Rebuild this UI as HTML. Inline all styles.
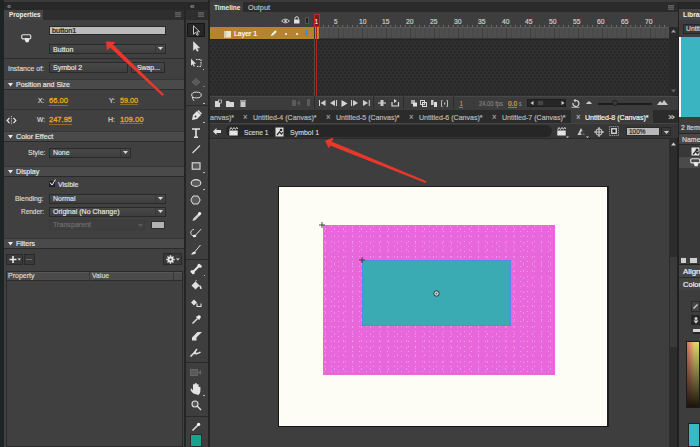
<!DOCTYPE html>
<html><head><meta charset="utf-8"><style>
*{box-sizing:border-box}
html,body{margin:0;padding:0}
body{width:700px;height:447px;overflow:hidden;position:relative;background:#3c3c3c;font-family:"Liberation Sans",sans-serif}
.a{position:absolute}
.t{position:absolute;white-space:pre;transform-origin:0 0;-webkit-text-stroke:0.2px currentColor}
svg{position:absolute;overflow:visible}
</style></head><body>
<div class="a" style="left:0px;top:0px;width:700px;height:2px;background:#3a3a3a;"></div>
<div class="a" style="left:0px;top:2px;width:700px;height:8px;background:#282828;"></div>
<div class="a" style="left:0px;top:0px;width:4px;height:447px;background:#1d2424;"></div>
<div class="t" style="left:7.00px;top:3.00px;font-size:7px;line-height:7px;font-weight:400;color:#8a8a8a;transform:scaleX(1.0240);">«</div>
<div class="t" style="left:189.50px;top:3.00px;font-size:7px;line-height:7px;font-weight:400;color:#8a8a8a;transform:scaleX(1.1520);">«</div>
<div class="a" style="left:4px;top:10px;width:180px;height:10px;background:#2e2e2e;"></div>
<div class="a" style="left:4px;top:10px;width:39px;height:10px;background:#444444;"></div>
<div class="t" style="left:8.50px;top:11.00px;font-size:7.5px;line-height:7.5px;font-weight:700;color:#f2f2f2;transform:scaleX(0.8488);-webkit-text-stroke:0;">Properties</div>
<svg style="left:174.5px;top:12px" width="6" height="5" viewBox="0 0 6 5"><rect x="0" y="0" width="6" height="5" fill="#5e5e5e"/><rect x="0" y="1.5" width="6" height="0.6" fill="#3a3a3a"/><rect x="0" y="3.2" width="6" height="0.6" fill="#3a3a3a"/></svg>
<div class="a" style="left:4px;top:20px;width:180px;height:427px;background:#404040;"></div>
<div class="a" style="left:184px;top:10px;width:2px;height:437px;background:#252525;"></div>
<div class="a" style="left:48.5px;top:25.5px;width:117px;height:9px;background:#bcbcbc;border:1px solid #2a2a2a"></div>
<div class="t" style="left:51.80px;top:27.00px;font-size:8px;line-height:8px;font-weight:400;color:#151515;transform:scaleX(0.9138);">button1</div>
<svg style="left:20px;top:33px" width="12" height="11" viewBox="0 0 12 11"><path d="M3 1.8h6.5a1.3 1.3 0 0 1 1.3 1.3v1.5a1.3 1.3 0 0 1-1.3 1.3H3a1.3 1.3 0 0 1-1.3-1.3V3.1A1.3 1.3 0 0 1 3 1.8z" fill="none" stroke="#e4e4e4" stroke-width="1.1"/><path d="M4.6 6.5l1.2-1.8 1 0.6 1.8.3.6 1.2-.6 2.5h-2.8z" fill="#ececec"/></svg>
<div class="a" style="left:48.5px;top:43.5px;width:117px;height:10px;background:linear-gradient(#484848,#3e3e3e);border:1px solid #2a2a2a"></div>
<div class="a" style="left:154.5px;top:44.5px;width:1px;height:8px;background:#363636;"></div>
<svg style="left:157.5px;top:47.0px" width="5" height="3"><path d="M0 0h5l-2.5 3z" fill="#d8d8d8"/></svg>
<div class="t" style="left:52.80px;top:46.00px;font-size:8px;line-height:8px;font-weight:400;color:#e0e0e0;transform:scaleX(0.8816);">Button</div>
<div class="a" style="left:4px;top:58px;width:180px;height:1px;background:#2c2c2c;"></div>
<div class="t" style="left:8.00px;top:65.00px;font-size:8px;line-height:8px;font-weight:400;color:#d8d8d8;transform:scaleX(0.8704);">Instance of:</div>
<div class="a" style="left:48.5px;top:62px;width:79px;height:10.5px;background:linear-gradient(#484848,#3e3e3e);border:1px solid #2a2a2a"></div>
<div class="t" style="left:52.50px;top:64.00px;font-size:8px;line-height:8px;font-weight:400;color:#e0e0e0;transform:scaleX(0.8723);">Symbol 2</div>
<div class="a" style="left:131px;top:62px;width:34px;height:10.5px;background:linear-gradient(#484848,#3e3e3e);border:1px solid #2a2a2a"></div>
<div class="t" style="left:136.80px;top:64.00px;font-size:8px;line-height:8px;font-weight:400;color:#e0e0e0;transform:scaleX(0.8543);">Swap...</div>
<div class="a" style="left:4px;top:78.5px;width:180px;height:11px;background:#4a4a4a;border-top:1px solid #363636;border-bottom:1px solid #2a2a2a"></div>
<svg style="left:7.5px;top:82.5px" width="5" height="4"><path d="M0 0h5l-2.5 3.5z" fill="#e8e8e8"/></svg>
<div class="t" style="left:16.00px;top:81.00px;font-size:8px;line-height:8px;font-weight:400;color:#e6e6e6;transform:scaleX(0.8734);">Position and Size</div>
<div class="t" style="left:38.30px;top:97.00px;font-size:8px;line-height:8px;font-weight:400;color:#d8d8d8;transform:scaleX(0.8331);">X:</div>
<div class="t" style="left:49.00px;top:97.00px;font-size:8px;line-height:8px;font-weight:400;color:#eaa81e;transform:scaleX(0.9485);-webkit-text-stroke:0.3px currentColor">66.00</div>
<div class="a" style="left:49px;top:104.5px;width:19px;height:1px;background:#8c6a30;"></div>
<div class="t" style="left:109.00px;top:97.00px;font-size:8px;line-height:8px;font-weight:400;color:#d8d8d8;transform:scaleX(0.8421);">Y:</div>
<div class="t" style="left:120.00px;top:97.00px;font-size:8px;line-height:8px;font-weight:400;color:#eaa81e;transform:scaleX(0.8986);-webkit-text-stroke:0.3px currentColor">59.00</div>
<div class="a" style="left:120px;top:104.2px;width:18px;height:1px;background:#8c6a30;"></div>
<div class="a" style="left:4px;top:109px;width:180px;height:1px;background:#333333;"></div>
<div class="t" style="left:36.60px;top:116.00px;font-size:8px;line-height:8px;font-weight:400;color:#d8d8d8;transform:scaleX(0.8298);">W:</div>
<div class="t" style="left:49.00px;top:116.00px;font-size:8px;line-height:8px;font-weight:400;color:#eaa81e;transform:scaleX(0.9400);-webkit-text-stroke:0.3px currentColor">247.95</div>
<div class="a" style="left:49px;top:123.5px;width:23px;height:1px;background:#8c6a30;"></div>
<div class="t" style="left:108.00px;top:116.00px;font-size:8px;line-height:8px;font-weight:400;color:#d8d8d8;transform:scaleX(0.8750);">H:</div>
<div class="t" style="left:120.00px;top:116.00px;font-size:8px;line-height:8px;font-weight:400;color:#eaa81e;transform:scaleX(0.9563);-webkit-text-stroke:0.3px currentColor">109.00</div>
<div class="a" style="left:120px;top:123.0px;width:23.400000000000006px;height:1px;background:#8c6a30;"></div>
<svg style="left:6px;top:116px" width="11" height="9" viewBox="0 0 11 9"><path d="M3.5 1.8L1.2 4.5 3.5 7.2M7.5 1.8L9.8 4.5 7.5 7.2" fill="none" stroke="#e0e0e0" stroke-width="1.3"/><path d="M5.5 0v9" stroke="#cfcfcf" stroke-width="0.9" stroke-dasharray="1.2 1"/></svg>
<div class="a" style="left:4px;top:131px;width:180px;height:11px;background:#4a4a4a;border-top:1px solid #363636;border-bottom:1px solid #2a2a2a"></div>
<svg style="left:7.5px;top:135px" width="5" height="4"><path d="M0 0h5l-2.5 3.5z" fill="#e8e8e8"/></svg>
<div class="t" style="left:16.00px;top:133.00px;font-size:8px;line-height:8px;font-weight:400;color:#e6e6e6;transform:scaleX(0.8930);">Color Effect</div>
<div class="t" style="left:27.50px;top:149.00px;font-size:8px;line-height:8px;font-weight:400;color:#d8d8d8;transform:scaleX(0.8743);">Style:</div>
<div class="a" style="left:48.5px;top:147.5px;width:82px;height:10.5px;background:linear-gradient(#484848,#3e3e3e);border:1px solid #2a2a2a"></div>
<div class="a" style="left:119.5px;top:148.5px;width:1px;height:8.5px;background:#363636;"></div>
<svg style="left:122.5px;top:151.25px" width="5" height="3"><path d="M0 0h5l-2.5 3z" fill="#d8d8d8"/></svg>
<div class="t" style="left:52.50px;top:149.00px;font-size:8px;line-height:8px;font-weight:400;color:#e0e0e0;transform:scaleX(0.8627);">None</div>
<div class="a" style="left:4px;top:165.5px;width:180px;height:11px;background:#4a4a4a;border-top:1px solid #363636;border-bottom:1px solid #2a2a2a"></div>
<svg style="left:7.5px;top:169.5px" width="5" height="4"><path d="M0 0h5l-2.5 3.5z" fill="#e8e8e8"/></svg>
<div class="t" style="left:16.00px;top:168.00px;font-size:8px;line-height:8px;font-weight:400;color:#e6e6e6;transform:scaleX(0.8920);">Display</div>
<div class="a" style="left:48.5px;top:180.5px;width:6.5px;height:6.5px;background:#2c2c2c;border:1px solid #1e1e1e"></div>
<svg style="left:49px;top:179px" width="7" height="7"><path d="M1 3.5l2 2.5 3.5-5.5" fill="none" stroke="#f0f0f0" stroke-width="1"/></svg>
<div class="t" style="left:57.50px;top:181.00px;font-size:8px;line-height:8px;font-weight:400;color:#e0e0e0;transform:scaleX(0.8753);">Visible</div>
<div class="t" style="left:15.00px;top:195.00px;font-size:8px;line-height:8px;font-weight:400;color:#d8d8d8;transform:scaleX(0.8543);">Blending:</div>
<div class="a" style="left:48.5px;top:194px;width:117px;height:9.5px;background:linear-gradient(#484848,#3e3e3e);border:1px solid #2a2a2a"></div>
<div class="a" style="left:154.5px;top:195px;width:1px;height:7.5px;background:#363636;"></div>
<svg style="left:157.5px;top:197.25px" width="5" height="3"><path d="M0 0h5l-2.5 3z" fill="#d8d8d8"/></svg>
<div class="t" style="left:52.50px;top:195.00px;font-size:8px;line-height:8px;font-weight:400;color:#e0e0e0;transform:scaleX(0.8727);">Normal</div>
<div class="t" style="left:20.50px;top:208.00px;font-size:8px;line-height:8px;font-weight:400;color:#d8d8d8;transform:scaleX(0.8079);">Render:</div>
<div class="a" style="left:48.5px;top:207px;width:117px;height:9.5px;background:linear-gradient(#484848,#3e3e3e);border:1px solid #2a2a2a"></div>
<div class="a" style="left:154.5px;top:208px;width:1px;height:7.5px;background:#363636;"></div>
<svg style="left:157.5px;top:210.25px" width="5" height="3"><path d="M0 0h5l-2.5 3z" fill="#d8d8d8"/></svg>
<div class="t" style="left:52.50px;top:208.00px;font-size:8px;line-height:8px;font-weight:400;color:#e0e0e0;transform:scaleX(0.8797);">Original (No Change)</div>
<div class="a" style="left:48.5px;top:220px;width:96px;height:9.5px;background:#3f3f3f;border:1px solid #3b3b3b"></div>
<svg style="left:138px;top:223.5px" width="5" height="3" viewBox="0 0 5 3"><path d="M0 0h5l-2.5 3z" fill="#5a5a5a"/></svg>
<div class="t" style="left:52.50px;top:221.00px;font-size:8px;line-height:8px;font-weight:400;color:#6e6e6e;transform:scaleX(0.8893);">Transparent</div>
<div class="a" style="left:150.7px;top:221px;width:14.3px;height:8px;background:#b3b3b3;border:1px solid #2e2e2e"></div>
<div class="a" style="left:4px;top:237.5px;width:180px;height:11px;background:#4a4a4a;border-top:1px solid #363636;border-bottom:1px solid #2a2a2a"></div>
<svg style="left:7.5px;top:241.5px" width="5" height="4"><path d="M0 0h5l-2.5 3.5z" fill="#e8e8e8"/></svg>
<div class="t" style="left:16.00px;top:240.00px;font-size:8px;line-height:8px;font-weight:400;color:#e6e6e6;transform:scaleX(0.8723);">Filters</div>
<div class="a" style="left:5.5px;top:253.5px;width:17px;height:11.5px;background:#3a3a3a;border:1px solid #2a2a2a"></div>
<div class="a" style="left:23.5px;top:253.5px;width:11px;height:11.5px;background:#3a3a3a;border:1px solid #2a2a2a"></div>
<svg style="left:9px;top:255.5px" width="12" height="7"><path d="M4 0v7M0.5 3.5h7" stroke="#e8e8e8" stroke-width="1.6"/><path d="M8.5 2.5h3.5l-1.75 2z" fill="#e0e0e0"/></svg>
<div class="a" style="left:26px;top:259px;width:6px;height:1px;background:#6a6a6a;"></div>
<div class="a" style="left:162.6px;top:253.3px;width:19.4px;height:12.2px;background:#3a3a3a;border:1px solid #2a2a2a"></div>
<svg style="left:166px;top:255px" width="14" height="9" viewBox="0 0 14 9"><g transform="translate(0.5,0.5)"><rect x="3.3" y="-0.2" width="1.4" height="8.4" fill="#e4e4e4" transform="rotate(0 4 4)"/><rect x="3.3" y="-0.2" width="1.4" height="8.4" fill="#e4e4e4" transform="rotate(45 4 4)"/><rect x="3.3" y="-0.2" width="1.4" height="8.4" fill="#e4e4e4" transform="rotate(90 4 4)"/><rect x="3.3" y="-0.2" width="1.4" height="8.4" fill="#e4e4e4" transform="rotate(135 4 4)"/><circle cx="4" cy="4" r="2.9" fill="#e4e4e4"/><circle cx="4" cy="4" r="1.1" fill="#3a3a3a"/></g><path d="M10 3.5h3.6l-1.8 2z" fill="#e0e0e0"/></svg>
<div class="a" style="left:5.5px;top:270.5px;width:177px;height:176.5px;background:#404040;border:1px solid #2a2a2a"></div>
<div class="a" style="left:6.5px;top:271.5px;width:175px;height:9.5px;background:#4b4b4b;border-bottom:1px solid #2c2c2c;border-top:1px solid #575757"></div>
<div class="a" style="left:89px;top:271.5px;width:1px;height:9.5px;background:#3a3a3a;"></div>
<div class="a" style="left:173px;top:271.5px;width:1px;height:9.5px;background:#3a3a3a;"></div>
<div class="t" style="left:8.00px;top:272.00px;font-size:8px;line-height:8px;font-weight:400;color:#d8d8d8;transform:scaleX(0.8765);">Property</div>
<div class="t" style="left:92.00px;top:272.00px;font-size:8px;line-height:8px;font-weight:400;color:#d8d8d8;transform:scaleX(0.8553);">Value</div>
<div class="a" style="left:186px;top:10px;width:22px;height:437px;background:#3e3e3e;"></div>
<div class="a" style="left:186px;top:10px;width:22px;height:10px;background:#2e2e2e;"></div>
<svg style="left:197.5px;top:12px" width="6" height="5" viewBox="0 0 6 5"><rect x="0" y="0" width="6" height="5" fill="#5e5e5e"/><rect x="0" y="1.5" width="6" height="0.6" fill="#3a3a3a"/><rect x="0" y="3.2" width="6" height="0.6" fill="#3a3a3a"/></svg>
<div class="a" style="left:208px;top:0px;width:2px;height:447px;background:#252525;"></div>
<div class="a" style="left:186.7px;top:23px;width:18.5px;height:14px;background:#262626;border:1px solid #161616"></div>
<svg style="left:192px;top:24.5px" width="8" height="11" viewBox="0 0 8 11"><path d="M1.5 0.8v8.5l2-2 1.6 3 1.2-.6-1.5-2.9h2.8z" fill="#222" stroke="#d8d8d8" stroke-width="0.9"/></svg>
<svg style="left:192px;top:41px" width="8" height="11" viewBox="0 0 8 11"><path d="M1.5 0.8v8.5l2-2 1.6 3 1.2-.6-1.5-2.9h2.8z" fill="#e0e0e0" stroke="#e0e0e0" stroke-width="0.6"/></svg>
<svg style="left:190px;top:58px" width="12" height="10" viewBox="0 0 12 10"><path d="M1 0.8v7l1.6-1.6 1.3 2.6 1-.5-1.2-2.5h2.4z" fill="#e0e0e0"/><path d="M6 1.5h5M11 1.5v6M11 8.5h-5" stroke="#e0e0e0" stroke-width="1.2" stroke-dasharray="1.5 1"/></svg>
<div class="a" style="left:202.5px;top:68.5px;width:1.5px;height:1.5px;background:#bbbbbb;"></div>
<svg style="left:191px;top:78px" width="10" height="8" viewBox="0 0 10 8"><path d="M5 0.5l4 3.5-4 3.5-4-3.5z" fill="#5a5a5a" stroke="#666" stroke-width="0.8"/></svg>
<div class="a" style="left:203px;top:85.5px;width:1.5px;height:1.5px;background:#777;"></div>
<svg style="left:190px;top:91px" width="12" height="11" viewBox="0 0 12 11"><ellipse cx="6.5" cy="4" rx="4.8" ry="2.9" fill="none" stroke="#e0e0e0" stroke-width="1"/><path d="M2.5 6c0 2 1 3 1.5 4" stroke="#e0e0e0" stroke-width="1" fill="none"/></svg>
<div class="a" style="left:203px;top:102.5px;width:1.5px;height:1.5px;background:#bbbbbb;"></div>
<div class="a" style="left:186px;top:105px;width:22px;height:1px;background:#2a2a2a;"></div>
<svg style="left:190px;top:110px" width="12" height="12" viewBox="0 0 12 12"><path d="M2 10l1-5 4-4 4 4-4 4z" fill="#e4e4e4"/><path d="M8 0.5l3.5 3.5" stroke="#e4e4e4" stroke-width="1.4"/><circle cx="5.5" cy="6.5" r="0.9" fill="#333"/></svg>
<div class="a" style="left:203px;top:121.5px;width:1.5px;height:1.5px;background:#bbbbbb;"></div>
<svg style="left:191px;top:128px" width="10" height="10" viewBox="0 0 10 10"><path d="M1 1h8M5 1v8.5M3 9.3h4" stroke="#e4e4e4" stroke-width="1.6" fill="none"/></svg>
<svg style="left:191px;top:144px" width="10" height="10" viewBox="0 0 10 10"><path d="M1.5 9l7.5-7.5" stroke="#e0e0e0" stroke-width="1.1"/></svg>
<svg style="left:191px;top:161px" width="10" height="10" viewBox="0 0 10 10"><rect x="1.2" y="1.8" width="7.8" height="6.4" fill="#5a5a5a" stroke="#e0e0e0" stroke-width="1.1"/></svg>
<div class="a" style="left:203px;top:171.5px;width:1.5px;height:1.5px;background:#bbbbbb;"></div>
<svg style="left:190px;top:178px" width="12" height="10" viewBox="0 0 12 10"><ellipse cx="6" cy="5" rx="4.8" ry="3.4" fill="#5a5a5a" stroke="#e0e0e0" stroke-width="1.1"/></svg>
<div class="a" style="left:203px;top:188.5px;width:1.5px;height:1.5px;background:#bbbbbb;"></div>
<svg style="left:190px;top:195px" width="11" height="10" viewBox="0 0 11 10"><path d="M3 1h5l2.2 4-2.2 4h-5l-2.2-4z" fill="#5a5a5a" stroke="#e0e0e0" stroke-width="1"/></svg>
<svg style="left:190px;top:211px" width="12" height="12" viewBox="0 0 12 12"><path d="M2.5 10l0.8-2.6 5.5-5.5 1.8 1.8-5.5 5.5z" fill="#d0d0d0"/><circle cx="9.6" cy="2.6" r="1.6" fill="#f4f4f4"/></svg>
<svg style="left:189px;top:228px" width="14" height="11" viewBox="0 0 14 11"><path d="M5 1.5a3.2 3.2 0 1 0 1.5 6" fill="none" stroke="#d8d8d8" stroke-width="1"/><path d="M6.5 7.2l5.5-6" stroke="#e0e0e0" stroke-width="1"/><ellipse cx="5.5" cy="8" rx="1.8" ry="1.3" fill="#e8e8e8"/></svg>
<svg style="left:190px;top:244px" width="12" height="11" viewBox="0 0 12 11"><path d="M5 7.5l5.5-6.5" stroke="#e0e0e0" stroke-width="1"/><path d="M1 10.5c1-2 2.5-3.5 4.5-3l0.5 1.5c-1 1-3 1.5-5 1.5z" fill="#e8e8e8"/></svg>
<div class="a" style="left:186px;top:259px;width:22px;height:1px;background:#2a2a2a;"></div>
<svg style="left:190px;top:263px" width="12" height="12" viewBox="0 0 12 12"><path d="M3 9l6-6" stroke="#e8e8e8" stroke-width="2.2"/><circle cx="9" cy="2.2" r="1.5" fill="#e8e8e8"/><circle cx="10.2" cy="3.2" r="1.5" fill="#e8e8e8"/><circle cx="2" cy="8.5" r="1.5" fill="#e8e8e8"/><circle cx="3.2" cy="9.8" r="1.5" fill="#e8e8e8"/></svg>
<div class="a" style="left:203.5px;top:274.5px;width:1.5px;height:1.5px;background:#bbbbbb;"></div>
<svg style="left:190px;top:280px" width="12" height="11" viewBox="0 0 12 11"><path d="M1.5 5.5l4-4 4 4-4 4z" fill="#e0e0e0"/><path d="M5.5 1.5c0-1 1-1.5 1.5-.5" stroke="#e0e0e0" fill="none" stroke-width="0.8"/><path d="M9.5 5.5c1 1 1.5 2 1.5 3.5" stroke="#e8e8e8" stroke-width="1.4" fill="none"/></svg>
<svg style="left:190px;top:297px" width="12" height="11" viewBox="0 0 12 11"><path d="M1 5.5l3-3 3 3-3 3z" fill="#e0e0e0"/><path d="M7 6.5v3h4v-3" stroke="#e0e0e0" stroke-width="1.1" fill="none"/></svg>
<svg style="left:191px;top:314px" width="11" height="11" viewBox="0 0 11 11"><path d="M1.5 9.5l5-5" stroke="#e0e0e0" stroke-width="1.5"/><circle cx="8" cy="3" r="1.8" fill="#f0f0f0"/><path d="M5.5 2.5l3 3" stroke="#f0f0f0" stroke-width="1.2"/></svg>
<svg style="left:191px;top:331px" width="12" height="10" viewBox="0 0 12 10"><path d="M1 6.5l5.5-5.5h4.5l-5.5 5.5v3h-4.5z" fill="#e0e0e0"/><path d="M5.5 6.5l5.5-5.5" stroke="#888" stroke-width="0.6"/></svg>
<svg style="left:189px;top:348px" width="14" height="10" viewBox="0 0 14 10"><path d="M1.5 8.5l3.5-3.5c1-1 2-3 3-4M5 5c2 1 4 1 6.5-1" stroke="#e4e4e4" stroke-width="1.5" fill="none"/><circle cx="5.8" cy="5" r="1.3" fill="#ddd"/></svg>
<div class="a" style="left:186px;top:362px;width:22px;height:1px;background:#2a2a2a;"></div>
<svg style="left:190px;top:369px" width="12" height="7" viewBox="0 0 12 7"><rect x="0.5" y="0.5" width="7" height="6" fill="#5a5a5a" stroke="#666"/><path d="M8 3.5l3-2.5v5z" fill="#666"/></svg>
<svg style="left:190px;top:383px" width="12" height="12" viewBox="0 0 12 12"><path d="M3.5 10.5c-1.5-1-3-3-3-4.5l1-.5 1.5 2v-6l1 -.5 .8 .5v4-5l1-.5 1 .5v5-4l1-.3.8.4v5-2.5l1-.4.8.4v3.5c0 2-1 3.5-2 4.5z" fill="#e4e4e4"/></svg>
<div class="a" style="left:203px;top:394.5px;width:1.5px;height:1.5px;background:#bbbbbb;"></div>
<svg style="left:191px;top:400px" width="11" height="11" viewBox="0 0 11 11"><circle cx="4" cy="4" r="3" fill="#555" stroke="#e0e0e0" stroke-width="1.1"/><path d="M6.3 6.3l3.8 3.8" stroke="#e0e0e0" stroke-width="1.4"/></svg>
<div class="a" style="left:186px;top:416px;width:22px;height:1px;background:#2a2a2a;"></div>
<svg style="left:191px;top:422px" width="10" height="10" viewBox="0 0 10 10"><path d="M1.5 8.5l5.5-5.5" stroke="#d4d4d4" stroke-width="1.7"/><circle cx="7.6" cy="2.4" r="1.7" fill="#f2f2f2"/></svg>
<div class="a" style="left:190px;top:434px;width:11.5px;height:12.5px;background:#17a48d;border:1px solid #2a2a2a"></div>
<div class="a" style="left:210px;top:2px;width:468px;height:10px;background:#2b2b2b;"></div>
<div class="a" style="left:210px;top:2px;width:33px;height:10px;background:#3e3e3e;"></div>
<div class="t" style="left:213.60px;top:4.00px;font-size:8px;line-height:8px;font-weight:700;color:#ececec;transform:scaleX(0.8170);-webkit-text-stroke:0;">Timeline</div>
<div class="t" style="left:247.90px;top:4.00px;font-size:8px;line-height:8px;font-weight:400;color:#bdbdbd;transform:scaleX(0.9202);">Output</div>
<svg style="left:668px;top:5px" width="6" height="5" viewBox="0 0 6 5"><rect x="0" y="0" width="6" height="5" fill="#5e5e5e"/><rect x="0" y="1.5" width="6" height="0.6" fill="#3a3a3a"/><rect x="0" y="3.2" width="6" height="0.6" fill="#3a3a3a"/></svg>
<div class="a" style="left:210px;top:12px;width:468px;height:15px;background:#3e3e3e;"></div>
<svg style="left:281px;top:17.5px" width="9" height="6" viewBox="0 0 9 6"><path d="M0.6 3Q4.5 -0.8 8.4 3Q4.5 6.8 0.6 3z" fill="none" stroke="#d8d8d8" stroke-width="0.9"/><circle cx="4.5" cy="3" r="1.2" fill="#d8d8d8"/></svg>
<svg style="left:292.5px;top:16px" width="7.5" height="8" viewBox="0 0 7.5 8"><path d="M2 3.5v-1a1.75 1.75 0 0 1 3.5 0v1" fill="none" stroke="#e0e0e0" stroke-width="1"/><rect x="1" y="3.5" width="5.5" height="4" fill="#e0e0e0"/></svg>
<div class="a" style="left:305px;top:17px;width:4px;height:7px;background:#222;border:1px solid #555"></div>
<svg style="left:313px;top:25px" width="356" height="2" viewBox="0 0 356 2"><rect x="10.2" y="0" width="0.8" height="1.6" fill="#8a8a8a"/><rect x="15.0" y="0" width="0.8" height="1.6" fill="#8a8a8a"/><rect x="19.8" y="0" width="0.8" height="1.6" fill="#8a8a8a"/><rect x="24.6" y="0" width="0.8" height="1.6" fill="#8a8a8a"/><rect x="29.4" y="0" width="0.8" height="1.6" fill="#8a8a8a"/><rect x="34.2" y="0" width="0.8" height="1.6" fill="#8a8a8a"/><rect x="39.0" y="0" width="0.8" height="1.6" fill="#8a8a8a"/><rect x="43.8" y="0" width="0.8" height="1.6" fill="#8a8a8a"/><rect x="48.6" y="0" width="0.8" height="1.6" fill="#8a8a8a"/><rect x="53.4" y="0" width="0.8" height="1.6" fill="#8a8a8a"/><rect x="58.2" y="0" width="0.8" height="1.6" fill="#8a8a8a"/><rect x="63.0" y="0" width="0.8" height="1.6" fill="#8a8a8a"/><rect x="67.8" y="0" width="0.8" height="1.6" fill="#8a8a8a"/><rect x="72.6" y="0" width="0.8" height="1.6" fill="#8a8a8a"/><rect x="77.4" y="0" width="0.8" height="1.6" fill="#8a8a8a"/><rect x="82.2" y="0" width="0.8" height="1.6" fill="#8a8a8a"/><rect x="87.0" y="0" width="0.8" height="1.6" fill="#8a8a8a"/><rect x="91.8" y="0" width="0.8" height="1.6" fill="#8a8a8a"/><rect x="96.6" y="0" width="0.8" height="1.6" fill="#8a8a8a"/><rect x="101.4" y="0" width="0.8" height="1.6" fill="#8a8a8a"/><rect x="106.2" y="0" width="0.8" height="1.6" fill="#8a8a8a"/><rect x="111.0" y="0" width="0.8" height="1.6" fill="#8a8a8a"/><rect x="115.8" y="0" width="0.8" height="1.6" fill="#8a8a8a"/><rect x="120.6" y="0" width="0.8" height="1.6" fill="#8a8a8a"/><rect x="125.4" y="0" width="0.8" height="1.6" fill="#8a8a8a"/><rect x="130.2" y="0" width="0.8" height="1.6" fill="#8a8a8a"/><rect x="135.0" y="0" width="0.8" height="1.6" fill="#8a8a8a"/><rect x="139.8" y="0" width="0.8" height="1.6" fill="#8a8a8a"/><rect x="144.6" y="0" width="0.8" height="1.6" fill="#8a8a8a"/><rect x="149.4" y="0" width="0.8" height="1.6" fill="#8a8a8a"/><rect x="154.2" y="0" width="0.8" height="1.6" fill="#8a8a8a"/><rect x="159.0" y="0" width="0.8" height="1.6" fill="#8a8a8a"/><rect x="163.8" y="0" width="0.8" height="1.6" fill="#8a8a8a"/><rect x="168.6" y="0" width="0.8" height="1.6" fill="#8a8a8a"/><rect x="173.4" y="0" width="0.8" height="1.6" fill="#8a8a8a"/><rect x="178.2" y="0" width="0.8" height="1.6" fill="#8a8a8a"/><rect x="183.0" y="0" width="0.8" height="1.6" fill="#8a8a8a"/><rect x="187.8" y="0" width="0.8" height="1.6" fill="#8a8a8a"/><rect x="192.6" y="0" width="0.8" height="1.6" fill="#8a8a8a"/><rect x="197.4" y="0" width="0.8" height="1.6" fill="#8a8a8a"/><rect x="202.2" y="0" width="0.8" height="1.6" fill="#8a8a8a"/><rect x="207.0" y="0" width="0.8" height="1.6" fill="#8a8a8a"/><rect x="211.8" y="0" width="0.8" height="1.6" fill="#8a8a8a"/><rect x="216.6" y="0" width="0.8" height="1.6" fill="#8a8a8a"/><rect x="221.4" y="0" width="0.8" height="1.6" fill="#8a8a8a"/><rect x="226.2" y="0" width="0.8" height="1.6" fill="#8a8a8a"/><rect x="231.0" y="0" width="0.8" height="1.6" fill="#8a8a8a"/><rect x="235.8" y="0" width="0.8" height="1.6" fill="#8a8a8a"/><rect x="240.6" y="0" width="0.8" height="1.6" fill="#8a8a8a"/><rect x="245.4" y="0" width="0.8" height="1.6" fill="#8a8a8a"/><rect x="250.2" y="0" width="0.8" height="1.6" fill="#8a8a8a"/><rect x="255.0" y="0" width="0.8" height="1.6" fill="#8a8a8a"/><rect x="259.8" y="0" width="0.8" height="1.6" fill="#8a8a8a"/><rect x="264.6" y="0" width="0.8" height="1.6" fill="#8a8a8a"/><rect x="269.4" y="0" width="0.8" height="1.6" fill="#8a8a8a"/><rect x="274.2" y="0" width="0.8" height="1.6" fill="#8a8a8a"/><rect x="279.0" y="0" width="0.8" height="1.6" fill="#8a8a8a"/><rect x="283.8" y="0" width="0.8" height="1.6" fill="#8a8a8a"/><rect x="288.6" y="0" width="0.8" height="1.6" fill="#8a8a8a"/><rect x="293.4" y="0" width="0.8" height="1.6" fill="#8a8a8a"/><rect x="298.2" y="0" width="0.8" height="1.6" fill="#8a8a8a"/><rect x="303.0" y="0" width="0.8" height="1.6" fill="#8a8a8a"/><rect x="307.8" y="0" width="0.8" height="1.6" fill="#8a8a8a"/><rect x="312.6" y="0" width="0.8" height="1.6" fill="#8a8a8a"/><rect x="317.4" y="0" width="0.8" height="1.6" fill="#8a8a8a"/><rect x="322.2" y="0" width="0.8" height="1.6" fill="#8a8a8a"/><rect x="327.0" y="0" width="0.8" height="1.6" fill="#8a8a8a"/><rect x="331.8" y="0" width="0.8" height="1.6" fill="#8a8a8a"/><rect x="336.6" y="0" width="0.8" height="1.6" fill="#8a8a8a"/><rect x="341.4" y="0" width="0.8" height="1.6" fill="#8a8a8a"/><rect x="346.2" y="0" width="0.8" height="1.6" fill="#8a8a8a"/><rect x="351.0" y="0" width="0.8" height="1.6" fill="#8a8a8a"/></svg>
<div class="t" style="left:333.50px;top:18.00px;font-size:7px;line-height:7px;font-weight:400;color:#cccccc;transform:scaleX(0.8960);">5</div>
<div class="t" style="left:358.50px;top:18.00px;font-size:7px;line-height:7px;font-weight:400;color:#cccccc;transform:scaleX(0.9619);">10</div>
<div class="t" style="left:382.35px;top:18.00px;font-size:7px;line-height:7px;font-weight:400;color:#cccccc;transform:scaleX(0.9619);">15</div>
<div class="t" style="left:406.20px;top:18.00px;font-size:7px;line-height:7px;font-weight:400;color:#cccccc;transform:scaleX(0.9619);">20</div>
<div class="t" style="left:430.05px;top:18.00px;font-size:7px;line-height:7px;font-weight:400;color:#cccccc;transform:scaleX(0.9619);">25</div>
<div class="t" style="left:453.90px;top:18.00px;font-size:7px;line-height:7px;font-weight:400;color:#cccccc;transform:scaleX(0.9619);">30</div>
<div class="t" style="left:477.75px;top:18.00px;font-size:7px;line-height:7px;font-weight:400;color:#cccccc;transform:scaleX(0.9619);">35</div>
<div class="t" style="left:501.60px;top:18.00px;font-size:7px;line-height:7px;font-weight:400;color:#cccccc;transform:scaleX(0.9619);">40</div>
<div class="t" style="left:525.45px;top:18.00px;font-size:7px;line-height:7px;font-weight:400;color:#cccccc;transform:scaleX(0.9619);">45</div>
<div class="t" style="left:549.30px;top:18.00px;font-size:7px;line-height:7px;font-weight:400;color:#cccccc;transform:scaleX(0.9619);">50</div>
<div class="t" style="left:573.15px;top:18.00px;font-size:7px;line-height:7px;font-weight:400;color:#cccccc;transform:scaleX(0.9619);">55</div>
<div class="t" style="left:597.00px;top:18.00px;font-size:7px;line-height:7px;font-weight:400;color:#cccccc;transform:scaleX(0.9619);">60</div>
<div class="t" style="left:620.85px;top:18.00px;font-size:7px;line-height:7px;font-weight:400;color:#cccccc;transform:scaleX(0.9619);">65</div>
<div class="t" style="left:644.70px;top:18.00px;font-size:7px;line-height:7px;font-weight:400;color:#cccccc;transform:scaleX(0.9619);">70</div>
<div class="a" style="left:210px;top:27px;width:104px;height:11.5px;background:#b5842c;"></div>
<svg style="left:224px;top:30.5px" width="7.5" height="7" viewBox="0 0 7.5 7"><rect x="0" y="0" width="7" height="6.6" fill="#efe3c8"/><rect x="0" y="0" width="2.3" height="6.6" fill="#d9caa8"/></svg>
<div class="t" style="left:234.00px;top:30.00px;font-size:8px;line-height:8px;font-weight:400;color:#ffffff;transform:scaleX(0.8656);">Layer 1</div>
<svg style="left:270px;top:29.5px" width="7" height="7" viewBox="0 0 7 7"><path d="M0.8 6.2l1-2.5 3.5-3.5 1.5 1.5-3.5 3.5z" fill="#f0f0f0"/></svg>
<svg style="left:283.5px;top:31.5px" width="4" height="4" viewBox="0 0 4 4"><circle cx="2" cy="2" r="1.1" fill="#f4f4f4"/></svg>
<svg style="left:294.8px;top:31.5px" width="4" height="4" viewBox="0 0 4 4"><circle cx="2" cy="2" r="1.1" fill="#f4f4f4"/></svg>
<div class="a" style="left:305.3px;top:29.7px;width:3.2px;height:6.7px;background:#3a8cf0;"></div>
<div class="a" style="left:314px;top:27px;width:355px;height:12px;background:#4e4e4e;border-top:1px solid #5a5a5a;border-bottom:1px solid #333"></div>
<svg style="left:314px;top:27px" width="355" height="12" viewBox="0 0 355 12"><rect x="5.0" y="1" width="0.8" height="10.5" fill="#474747"/><rect x="9.8" y="1" width="0.8" height="10.5" fill="#474747"/><rect x="14.6" y="1" width="0.8" height="10.5" fill="#474747"/><rect x="19.4" y="1" width="0.8" height="10.5" fill="#474747"/><rect x="24.2" y="1" width="0.8" height="10.5" fill="#3c3c3c"/><rect x="29.0" y="1" width="0.8" height="10.5" fill="#474747"/><rect x="33.8" y="1" width="0.8" height="10.5" fill="#474747"/><rect x="38.6" y="1" width="0.8" height="10.5" fill="#474747"/><rect x="43.4" y="1" width="0.8" height="10.5" fill="#474747"/><rect x="48.2" y="1" width="0.8" height="10.5" fill="#3c3c3c"/><rect x="53.0" y="1" width="0.8" height="10.5" fill="#474747"/><rect x="57.8" y="1" width="0.8" height="10.5" fill="#474747"/><rect x="62.6" y="1" width="0.8" height="10.5" fill="#474747"/><rect x="67.4" y="1" width="0.8" height="10.5" fill="#474747"/><rect x="72.2" y="1" width="0.8" height="10.5" fill="#3c3c3c"/><rect x="77.0" y="1" width="0.8" height="10.5" fill="#474747"/><rect x="81.8" y="1" width="0.8" height="10.5" fill="#474747"/><rect x="86.6" y="1" width="0.8" height="10.5" fill="#474747"/><rect x="91.4" y="1" width="0.8" height="10.5" fill="#474747"/><rect x="96.2" y="1" width="0.8" height="10.5" fill="#3c3c3c"/><rect x="101.0" y="1" width="0.8" height="10.5" fill="#474747"/><rect x="105.8" y="1" width="0.8" height="10.5" fill="#474747"/><rect x="110.6" y="1" width="0.8" height="10.5" fill="#474747"/><rect x="115.4" y="1" width="0.8" height="10.5" fill="#474747"/><rect x="120.2" y="1" width="0.8" height="10.5" fill="#3c3c3c"/><rect x="125.0" y="1" width="0.8" height="10.5" fill="#474747"/><rect x="129.8" y="1" width="0.8" height="10.5" fill="#474747"/><rect x="134.6" y="1" width="0.8" height="10.5" fill="#474747"/><rect x="139.4" y="1" width="0.8" height="10.5" fill="#474747"/><rect x="144.2" y="1" width="0.8" height="10.5" fill="#3c3c3c"/><rect x="149.0" y="1" width="0.8" height="10.5" fill="#474747"/><rect x="153.8" y="1" width="0.8" height="10.5" fill="#474747"/><rect x="158.6" y="1" width="0.8" height="10.5" fill="#474747"/><rect x="163.4" y="1" width="0.8" height="10.5" fill="#474747"/><rect x="168.2" y="1" width="0.8" height="10.5" fill="#3c3c3c"/><rect x="173.0" y="1" width="0.8" height="10.5" fill="#474747"/><rect x="177.8" y="1" width="0.8" height="10.5" fill="#474747"/><rect x="182.6" y="1" width="0.8" height="10.5" fill="#474747"/><rect x="187.4" y="1" width="0.8" height="10.5" fill="#474747"/><rect x="192.2" y="1" width="0.8" height="10.5" fill="#3c3c3c"/><rect x="197.0" y="1" width="0.8" height="10.5" fill="#474747"/><rect x="201.8" y="1" width="0.8" height="10.5" fill="#474747"/><rect x="206.6" y="1" width="0.8" height="10.5" fill="#474747"/><rect x="211.4" y="1" width="0.8" height="10.5" fill="#474747"/><rect x="216.2" y="1" width="0.8" height="10.5" fill="#3c3c3c"/><rect x="221.0" y="1" width="0.8" height="10.5" fill="#474747"/><rect x="225.8" y="1" width="0.8" height="10.5" fill="#474747"/><rect x="230.6" y="1" width="0.8" height="10.5" fill="#474747"/><rect x="235.4" y="1" width="0.8" height="10.5" fill="#474747"/><rect x="240.2" y="1" width="0.8" height="10.5" fill="#3c3c3c"/><rect x="245.0" y="1" width="0.8" height="10.5" fill="#474747"/><rect x="249.8" y="1" width="0.8" height="10.5" fill="#474747"/><rect x="254.6" y="1" width="0.8" height="10.5" fill="#474747"/><rect x="259.4" y="1" width="0.8" height="10.5" fill="#474747"/><rect x="264.2" y="1" width="0.8" height="10.5" fill="#3c3c3c"/><rect x="269.0" y="1" width="0.8" height="10.5" fill="#474747"/><rect x="273.8" y="1" width="0.8" height="10.5" fill="#474747"/><rect x="278.6" y="1" width="0.8" height="10.5" fill="#474747"/><rect x="283.4" y="1" width="0.8" height="10.5" fill="#474747"/><rect x="288.2" y="1" width="0.8" height="10.5" fill="#3c3c3c"/><rect x="293.0" y="1" width="0.8" height="10.5" fill="#474747"/><rect x="297.8" y="1" width="0.8" height="10.5" fill="#474747"/><rect x="302.6" y="1" width="0.8" height="10.5" fill="#474747"/><rect x="307.4" y="1" width="0.8" height="10.5" fill="#474747"/><rect x="312.2" y="1" width="0.8" height="10.5" fill="#3c3c3c"/><rect x="317.0" y="1" width="0.8" height="10.5" fill="#474747"/><rect x="321.8" y="1" width="0.8" height="10.5" fill="#474747"/><rect x="326.6" y="1" width="0.8" height="10.5" fill="#474747"/><rect x="331.4" y="1" width="0.8" height="10.5" fill="#474747"/><rect x="336.2" y="1" width="0.8" height="10.5" fill="#3c3c3c"/><rect x="341.0" y="1" width="0.8" height="10.5" fill="#474747"/><rect x="345.8" y="1" width="0.8" height="10.5" fill="#474747"/><rect x="350.6" y="1" width="0.8" height="10.5" fill="#474747"/><rect x="355.4" y="1" width="0.8" height="10.5" fill="#474747"/></svg>
<div class="a" style="left:314px;top:27px;width:5px;height:11.5px;background:#b08838;border-left:1px solid #3a3a3a"></div>
<div class="a" style="left:210px;top:39px;width:459px;height:57px;background:#303030;background-image:radial-gradient(circle at 1px 1px,#262626 0.7px,transparent 0.9px),radial-gradient(circle at 3px 4px,#262626 0.7px,transparent 0.9px);background-size:4px 6px"></div>
<div class="a" style="left:210px;top:38.5px;width:459px;height:1px;background:#262626;"></div>
<div class="a" style="left:669px;top:27px;width:9px;height:69px;background:#2a2a2a;"></div>
<svg style="left:671px;top:29px" width="5" height="4" viewBox="0 0 5 4"><path d="M0 3.5l2.5-3 2.5 3z" fill="#9a9a9a"/></svg>
<svg style="left:671px;top:89px" width="5" height="4" viewBox="0 0 5 4"><path d="M0 0.5l2.5 3 2.5-3z" fill="#666"/></svg>
<div class="a" style="left:313.5px;top:14px;width:6px;height:13px;background:#7a1c1c;border:1px solid #c42626"></div>
<div class="t" style="left:315.30px;top:18.00px;font-size:7px;line-height:7px;font-weight:400;color:#ffffff;transform:scaleX(0.6912);">1</div>
<div class="a" style="left:314px;top:39px;width:1px;height:57px;background:#4c4c4c;"></div>
<div class="a" style="left:316px;top:26px;width:1px;height:70px;background:#b42020;"></div>
<div class="a" style="left:210px;top:96px;width:468px;height:13px;background:#3c3c3c;border-top:1px solid #484848"></div>
<svg style="left:215px;top:100px" width="7" height="7" viewBox="0 0 7 7"><rect x="0" y="1" width="5" height="6" fill="#d8d8d8"/><rect x="3.5" y="0" width="3" height="3" fill="#3c3c3c" stroke="#d8d8d8" stroke-width="0.7"/></svg>
<svg style="left:226px;top:100px" width="8" height="7" viewBox="0 0 8 7"><path d="M0 1h3l1 1h4v5h-8z" fill="#d8d8d8"/></svg>
<svg style="left:240px;top:100px" width="6" height="7" viewBox="0 0 6 7"><rect x="0.5" y="1.5" width="5" height="5.5" fill="#c8c8c8"/><rect x="0" y="0.3" width="6" height="1" fill="#c8c8c8"/></svg>
<svg style="left:292px;top:100px" width="8" height="6" viewBox="0 0 8 6"><path d="M0 0h4v6h-4zM8 0l-3 3 3 3z" fill="#5a5a5a"/></svg>
<div class="a" style="left:307px;top:99px;width:3px;height:7px;background:#5a5a5a;"></div>
<div class="a" style="left:314px;top:96px;width:1px;height:13px;background:#2c2c2c;"></div>
<svg style="left:318.5px;top:100px" width="7" height="6" viewBox="0 0 7 6"><path d="M0.5 0v6" stroke="#cfcfcf" stroke-width="1"/><path d="M6.5 0l-5 3 5 3z" fill="#cfcfcf"/></svg>
<svg style="left:330px;top:100px" width="7" height="6" viewBox="0 0 7 6"><path d="M5 0l-5 3 5 3z" fill="#cfcfcf"/><path d="M6.5 0v6" stroke="#cfcfcf" stroke-width="1"/></svg>
<svg style="left:341px;top:99.5px" width="7" height="7" viewBox="0 0 7 7"><path d="M0.5 0l6 3.5-6 3.5z" fill="#d8d8d8"/></svg>
<svg style="left:351px;top:100px" width="7" height="6" viewBox="0 0 7 6"><path d="M0.5 0v6" stroke="#cfcfcf" stroke-width="1"/><path d="M2 0l5 3-5 3z" fill="#cfcfcf"/></svg>
<svg style="left:362.5px;top:100px" width="7" height="6" viewBox="0 0 7 6"><path d="M0 0l5 3-5 3z" fill="#cfcfcf"/><path d="M6.3 0v6" stroke="#cfcfcf" stroke-width="1"/></svg>
<div class="a" style="left:373px;top:96px;width:1px;height:13px;background:#2c2c2c;"></div>
<svg style="left:378px;top:100px" width="8" height="6" viewBox="0 0 8 6"><rect x="2.5" y="0" width="3" height="6" fill="#c8c8c8"/><path d="M0 3h8" stroke="#c8c8c8" stroke-width="1.2"/></svg>
<svg style="left:391px;top:99px" width="8" height="8" viewBox="0 0 8 8"><path d="M1 3v4h6.5v-4" fill="none" stroke="#d8d8d8" stroke-width="1.2"/><path d="M3 4l3-2-3-2z" fill="#d8d8d8"/></svg>
<div class="a" style="left:403px;top:96px;width:1px;height:13px;background:#2c2c2c;"></div>
<svg style="left:411px;top:99.5px" width="6" height="7" viewBox="0 0 6 7"><rect x="0" y="0" width="4" height="4" fill="#aaa"/><rect x="2" y="2.5" width="4" height="4" fill="#e0e0e0"/></svg>
<svg style="left:420px;top:99.5px" width="7" height="7" viewBox="0 0 7 7"><rect x="0.5" y="0.5" width="4" height="4" fill="none" stroke="#ccc"/><rect x="2.5" y="2.5" width="4" height="4" fill="none" stroke="#ddd"/></svg>
<svg style="left:431px;top:99.5px" width="6" height="7" viewBox="0 0 6 7"><rect x="0" y="0" width="2.5" height="5" fill="#ccc"/><rect x="3" y="2" width="3" height="5" fill="#ddd"/></svg>
<svg style="left:441px;top:99.5px" width="7" height="7" viewBox="0 0 7 7"><path d="M1.5 0.5h-1v6h1M5.5 0.5h1v6h-1" stroke="#ccc" fill="none" stroke-width="0.9"/><rect x="3" y="2.5" width="1.2" height="2" fill="#ccc"/></svg>
<div class="a" style="left:453px;top:96px;width:1px;height:13px;background:#2c2c2c;"></div>
<div class="t" style="left:460.00px;top:100.00px;font-size:7px;line-height:7px;font-weight:400;color:#e5a422;transform:scaleX(0.6400);">1</div>
<div class="a" style="left:459px;top:107px;width:4px;height:1px;background:#a97a2a;"></div>
<div class="t" style="left:479.00px;top:100.00px;font-size:7px;line-height:7px;font-weight:400;color:#7e7e7e;transform:scaleX(0.8330);">24.00 fps</div>
<div class="t" style="left:508.00px;top:100.00px;font-size:7px;line-height:7px;font-weight:400;color:#e5a422;transform:scaleX(0.9246);">0.0</div>
<div class="a" style="left:508px;top:107px;width:9px;height:1px;background:#a97a2a;"></div>
<div class="t" style="left:519.00px;top:100.00px;font-size:7px;line-height:7px;font-weight:400;color:#8a8a8a;transform:scaleX(0.7143);">s</div>
<div class="a" style="left:527px;top:98.5px;width:39px;height:8px;background:#262626;border:1px solid #1e1e1e"></div>
<svg style="left:529.5px;top:100.5px" width="4" height="4" viewBox="0 0 4 4"><path d="M3.5 0l-3 2 3 2z" fill="#d0d0d0"/></svg>
<div class="a" style="left:537px;top:99.5px;width:6.5px;height:6px;background:#454545;border:1px solid #2a2a2a"></div>
<svg style="left:561px;top:100.5px" width="4" height="4" viewBox="0 0 4 4"><path d="M0.5 0l3 2-3 2z" fill="#d0d0d0"/></svg>
<svg style="left:571px;top:98.5px" width="9" height="9" viewBox="0 0 9 9"><path d="M2 3.8a3 3 0 1 0 3-2.3h-1" fill="none" stroke="#d8d8d8" stroke-width="1.2"/><path d="M4.5 -0.2l-2 1.8 2 1.8z" fill="#d8d8d8"/><path d="M0.5 8.3h8" stroke="#d8d8d8" stroke-width="0.8"/></svg>
<svg style="left:585.5px;top:101px" width="6" height="3" viewBox="0 0 6 3"><path d="M0 3l2-2.5h2l2 2.5z" fill="#c8c8c8"/></svg>
<div class="a" style="left:598px;top:102.5px;width:54px;height:2px;background:#1c1c1c;"></div>
<svg style="left:611.5px;top:100px" width="6" height="6" viewBox="0 0 6 6"><circle cx="3" cy="3" r="2.6" fill="#3a3a3a" stroke="#1c1c1c" stroke-width="0.8"/></svg>
<svg style="left:657px;top:100px" width="11" height="5" viewBox="0 0 11 5"><path d="M0 5l3-4 2 2 2-3 4 5z" fill="#c8c8c8"/></svg>
<div class="a" style="left:210px;top:109.5px;width:468px;height:13px;background:#2b2b2b;"></div>
<div class="a" style="left:210px;top:122.5px;width:468px;height:1px;background:#444444;"></div>
<div class="t" style="left:209.50px;top:114.00px;font-size:8px;line-height:8px;font-weight:400;color:#b8b8b8;transform:scaleX(0.8885);">anvas)*</div>
<div class="t" style="left:243.00px;top:113.00px;font-size:9px;line-height:9px;font-weight:400;color:#a0a0a0;transform:scaleX(0.8546);">×</div>
<div class="t" style="left:253.00px;top:114.00px;font-size:8px;line-height:8px;font-weight:400;color:#b8b8b8;transform:scaleX(0.8830);">Untitled-4 (Canvas)*</div>
<div class="t" style="left:326.10px;top:113.00px;font-size:9px;line-height:9px;font-weight:400;color:#a0a0a0;transform:scaleX(0.8546);">×</div>
<div class="t" style="left:336.10px;top:114.00px;font-size:8px;line-height:8px;font-weight:400;color:#b8b8b8;transform:scaleX(0.8830);">Untitled-5 (Canvas)*</div>
<div class="t" style="left:409.20px;top:113.00px;font-size:9px;line-height:9px;font-weight:400;color:#a0a0a0;transform:scaleX(0.8546);">×</div>
<div class="t" style="left:419.20px;top:114.00px;font-size:8px;line-height:8px;font-weight:400;color:#b8b8b8;transform:scaleX(0.8830);">Untitled-6 (Canvas)*</div>
<div class="t" style="left:492.30px;top:113.00px;font-size:9px;line-height:9px;font-weight:400;color:#a0a0a0;transform:scaleX(0.8546);">×</div>
<div class="t" style="left:502.30px;top:114.00px;font-size:8px;line-height:8px;font-weight:400;color:#b8b8b8;transform:scaleX(0.8830);">Untitled-7 (Canvas)*</div>
<div class="a" style="left:570.7px;top:109.5px;width:82.3px;height:13px;background:#3c3c3c;"></div>
<div class="t" style="left:575.50px;top:113.00px;font-size:9px;line-height:9px;font-weight:400;color:#b0b0b0;transform:scaleX(0.8546);">×</div>
<div class="t" style="left:585.40px;top:114.00px;font-size:8px;line-height:8px;font-weight:400;color:#f4f4f4;transform:scaleX(0.8830);">Untitled-8 (Canvas)*</div>
<div class="t" style="left:667.50px;top:113.00px;font-size:9px;line-height:9px;font-weight:400;color:#cfcfcf;transform:scaleX(1.3956);">»</div>
<div class="a" style="left:210px;top:123.5px;width:468px;height:14.5px;background:#363636;"></div>
<div class="a" style="left:226px;top:125.3px;width:326px;height:11.5px;background:#262626;border-radius:6px"></div>
<svg style="left:212.5px;top:127.5px" width="8" height="7" viewBox="0 0 8 7"><path d="M0 3.5l3.5-3.5v2h4.5v3h-4.5v2z" fill="#e0e0e0"/></svg>
<svg style="left:229px;top:127.3px" width="9" height="9" viewBox="0 0 9 9"><rect x="0.3" y="3.5" width="8.4" height="5" fill="#e4e4e4"/><path d="M0.5 3l1.5-2.5 1.5 2M3.5 2.5l1.5-2 1.5 2M6.5 2l1.3-1.6 1 1.6" stroke="#e4e4e4" stroke-width="0.9" fill="none"/></svg>
<div class="t" style="left:243.90px;top:129.00px;font-size:8px;line-height:8px;font-weight:400;color:#d0d0d0;transform:scaleX(0.8345);">Scene 1</div>
<svg style="left:275px;top:126.5px" width="9" height="10" viewBox="0 0 9 10"><rect x="0.5" y="0.5" width="8" height="9" fill="#e0e0e0"/><path d="M2 8l2.5-3 2 2 1.5-2" stroke="#2a2a2a" stroke-width="1.2" fill="none"/><circle cx="6" cy="3" r="1.3" fill="#2a2a2a"/></svg>
<div class="t" style="left:290.30px;top:129.00px;font-size:8px;line-height:8px;font-weight:400;color:#d0d0d0;transform:scaleX(0.8723);">Symbol 1</div>
<svg style="left:556.5px;top:126.5px" width="12" height="11" viewBox="0 0 12 11"><rect x="0.3" y="3.5" width="8.4" height="5" fill="#e4e4e4"/><path d="M0.5 3l1.5-2.5 1.5 2M3.5 2.5l1.5-2 1.5 2M6.5 2l1.3-1.6 1 1.6" stroke="#e4e4e4" stroke-width="0.9" fill="none"/><path d="M9 9.5h3l-1.5 1.5z" fill="#ddd"/></svg>
<svg style="left:577px;top:126.5px" width="12" height="11" viewBox="0 0 12 11"><path d="M0.5 8l3.5-7 3.5 7z" fill="#cfcfcf"/><circle cx="5.5" cy="6" r="2" fill="#444"/><path d="M9 9.5h3l-1.5 1.5z" fill="#ddd"/></svg>
<svg style="left:593.5px;top:126.5px" width="10" height="10" viewBox="0 0 10 10"><circle cx="5" cy="5" r="3.2" fill="none" stroke="#d8d8d8" stroke-width="1"/><path d="M5 0v10M0 5h10" stroke="#d8d8d8" stroke-width="1"/></svg>
<svg style="left:609px;top:126px" width="10" height="10" viewBox="0 0 10 10"><rect x="0.5" y="0.5" width="9" height="9" fill="none" stroke="#9a9a9a" stroke-dasharray="1 0.8"/><rect x="2" y="2" width="6" height="6" fill="#c8c8c8"/><rect x="3.5" y="3.5" width="3" height="3" fill="#1e1e1e"/></svg>
<div class="a" style="left:625.7px;top:126.9px;width:34.6px;height:9.6px;background:#b8b8b8;border:1px solid #2a2a2a"></div>
<div class="t" style="left:628.50px;top:128.00px;font-size:8px;line-height:8px;font-weight:400;color:#1e1e1e;transform:scaleX(0.8061);">100%</div>
<div class="a" style="left:660.7px;top:126.9px;width:10.7px;height:9.6px;background:#393939;border:1px solid #262626"></div>
<svg style="left:663.5px;top:130.5px" width="5" height="3" viewBox="0 0 5 3"><path d="M0 0h5l-2.5 3z" fill="#d0d0d0"/></svg>
<div class="a" style="left:210px;top:138px;width:459px;height:309px;background:#3e3e3e;"></div>
<div class="a" style="left:210px;top:138px;width:459px;height:1px;background:#2a2a2a;"></div>
<div class="a" style="left:669px;top:138px;width:9px;height:309px;background:#2c2c2c;"></div>
<div class="a" style="left:670px;top:257px;width:6.5px;height:90px;background:#3a3a3a;"></div>
<svg style="left:671px;top:141.5px" width="5" height="4" viewBox="0 0 5 4"><path d="M0 3.5l2.5-3 2.5 3z" fill="#cfcfcf"/></svg>
<div class="a" style="left:677px;top:138px;width:2px;height:309px;background:#202020;"></div>
<div class="a" style="left:278px;top:186px;width:331px;height:241px;background:#fdfdf6;border-left:1px solid #151515;border-top:1px solid #1e1e1e;border-bottom:1px solid #151515;border-right:2px solid #1c1c1c"></div>
<div class="a" style="left:322.5px;top:225px;width:232px;height:149.5px;background:#e867da;background-image:radial-gradient(circle at 1.5px 1.5px,#f098ec 0.55px,transparent 0.8px),radial-gradient(circle at 2.5px 4px,#ec90ea 0.55px,transparent 0.8px);background-size:7px 5px,9px 7px"></div>
<div class="a" style="left:361.5px;top:260px;width:149px;height:66px;background:#3aabb2;border:1px solid #4a8ee8"></div>
<svg style="left:319px;top:222px" width="6" height="6" viewBox="0 0 6 6"><path d="M3 0v6M0 3h6" stroke="#333" stroke-width="0.9"/></svg>
<svg style="left:359px;top:257px" width="6" height="6" viewBox="0 0 6 6"><path d="M3 0v6M0 3h6" stroke="#333" stroke-width="0.9"/></svg>
<svg style="left:432.5px;top:289.5px" width="7" height="7" viewBox="0 0 7 7"><circle cx="3.5" cy="3.5" r="2.7" fill="#d8e8e8" stroke="#2a2a2a" stroke-width="1"/><circle cx="3.5" cy="3.5" r="0.9" fill="#555"/></svg>
<div class="a" style="left:678px;top:2px;width:1px;height:136px;background:#222222;"></div>
<div class="a" style="left:679px;top:9px;width:21px;height:438px;background:#3d3d3d;"></div>
<div class="a" style="left:679px;top:9px;width:21px;height:11px;background:#444444;"></div>
<div class="t" style="left:683.00px;top:11.00px;font-size:8px;line-height:8px;font-weight:700;color:#f2f2f2;transform:scaleX(0.8479);-webkit-text-stroke:0;">Library</div>
<div class="a" style="left:683px;top:23.5px;width:20px;height:10px;background:#393939;border:1px solid #262626"></div>
<div class="t" style="left:686.00px;top:25.00px;font-size:8px;line-height:8px;font-weight:400;color:#d8d8d8;transform:scaleX(0.8479);">Untitled</div>
<div class="a" style="left:679px;top:37px;width:21px;height:80px;background:#3ab4c0;"></div>
<div class="a" style="left:679px;top:37px;width:2px;height:80px;background:#f8f8f8;"></div>
<div class="t" style="left:681.00px;top:124.00px;font-size:8px;line-height:8px;font-weight:400;color:#d8d8d8;transform:scaleX(0.8528);">2 items</div>
<div class="a" style="left:679px;top:133px;width:21px;height:1px;background:#262626;"></div>
<div class="a" style="left:679px;top:134px;width:21px;height:10.5px;background:#474747;border-bottom:1px solid #2a2a2a"></div>
<div class="t" style="left:682.00px;top:136.00px;font-size:8px;line-height:8px;font-weight:400;color:#d8d8d8;transform:scaleX(0.8668);">Name</div>
<div class="a" style="left:679px;top:145px;width:21px;height:112px;background:#383838;"></div>
<svg style="left:691px;top:146.5px" width="9" height="9" viewBox="0 0 9 9"><rect x="0.5" y="0.5" width="8" height="8" fill="#e4e4e4"/><path d="M2 7.5l2.5-3 2 2 1.5-2" stroke="#2a2a2a" stroke-width="1.2" fill="none"/><circle cx="6" cy="3" r="1.5" fill="#2a2a2a"/></svg>
<div class="a" style="left:679px;top:157px;width:21px;height:11px;background:#4a4a4a;"></div>
<svg style="left:689px;top:157px" width="12" height="11" viewBox="0 0 12 11"><path d="M3 1.8h6.5a1.3 1.3 0 0 1 1.3 1.3v1.5a1.3 1.3 0 0 1-1.3 1.3H3a1.3 1.3 0 0 1-1.3-1.3V3.1A1.3 1.3 0 0 1 3 1.8z" fill="none" stroke="#e4e4e4" stroke-width="1.1"/><path d="M4.6 6.5l1.2-1.8 1 0.6 1.8.3.6 1.2-.6 2.5h-2.8z" fill="#ececec"/></svg>
<div class="a" style="left:679px;top:257px;width:21px;height:7px;background:#3d3d3d;"></div>
<div class="a" style="left:681px;top:258px;width:5px;height:5px;background:#d0d0d0;"></div>
<div class="a" style="left:690px;top:258px;width:7px;height:5px;background:#d0d0d0;"></div>
<div class="a" style="left:679px;top:264px;width:21px;height:1px;background:#222;"></div>
<div class="a" style="left:679px;top:265px;width:21px;height:12px;background:#454545;"></div>
<div class="t" style="left:683.00px;top:268.00px;font-size:8px;line-height:8px;font-weight:400;color:#f4f4f4;transform:scaleX(0.9833);">Align</div>
<div class="a" style="left:679px;top:277px;width:21px;height:1px;background:#2a2a2a;"></div>
<div class="a" style="left:679px;top:278px;width:21px;height:12px;background:#434343;"></div>
<div class="t" style="left:683.00px;top:281.00px;font-size:8px;line-height:8px;font-weight:400;color:#f4f4f4;transform:scaleX(0.9412);">Color</div>
<div class="a" style="left:679px;top:290px;width:21px;height:157px;background:#3d3d3d;"></div>
<div class="a" style="left:691px;top:301px;width:9px;height:11px;background:#444;border:1px solid #2a2a2a"></div>
<svg style="left:693px;top:303px" width="6" height="6" viewBox="0 0 6 6"><path d="M0.5 5.5l4-4" stroke="#ccc" stroke-width="1.4"/></svg>
<div class="a" style="left:691px;top:315px;width:9px;height:10px;background:#262626;"></div>
<svg style="left:693px;top:316px" width="6" height="8" viewBox="0 0 6 8"><circle cx="3" cy="2.5" r="1.5" fill="#ccc"/><path d="M0.5 4.5l2.5 3 2.5-3z" fill="#ddd"/></svg>
<div class="a" style="left:693px;top:329px;width:7px;height:5px;background:#d8d8d8;"></div>
<div class="a" style="left:693px;top:332px;width:7px;height:2px;background:#222;"></div>
<div class="a" style="left:686px;top:341px;width:14px;height:67px;background:linear-gradient(to bottom,rgba(0,0,0,0),#1a140c),linear-gradient(to right,#e06a6a,#e8d070 60%,#d8e070);border:1px solid #1c1c1c"></div>
<div class="a" style="left:688px;top:423px;width:12px;height:24px;background:#3ab8c8;border:1px solid #222"></div>
<svg style="left:0;top:0" width="700" height="447"><g fill="#e9382b"><path d="M106 41.5L115.5 42 107 50.5z"/><path d="M109.5 47L112.5 44 164 94.5 162.5 96z"/><path d="M325 140.7L333.5 137.5 329 148.5z"/><path d="M330 145.5L331.5 141.5 426.5 181.2 425.5 183z"/></g></svg>
</body></html>
